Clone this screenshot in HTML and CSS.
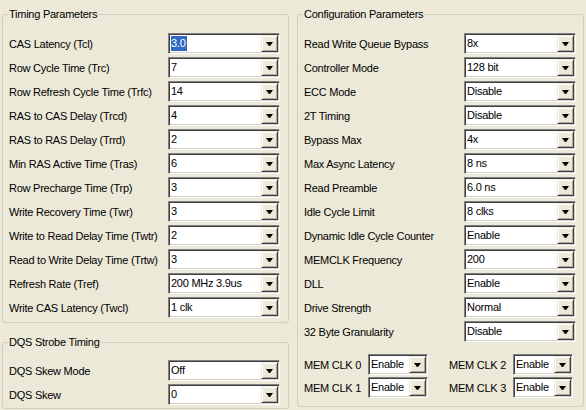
FILE: index.html
```html
<!DOCTYPE html>
<html>
<head>
<meta charset="utf-8">
<link rel="stylesheet" href="styles.css">
</head>
<body>
<div class="page">
  <div class="col">
    <div class="group g-timing">
      <span class="title">Timing Parameters</span>
      <div class="rows">
        <div class="row"><span class="lbl">CAS Latency (Tcl)</span><div class="combo"><span class="val"><span class="sel">3.0</span></span><span class="btn"></span></div></div>
        <div class="row"><span class="lbl">Row Cycle Time (Trc)</span><div class="combo"><span class="val">7</span><span class="btn"></span></div></div>
        <div class="row"><span class="lbl">Row Refresh Cycle Time (Trfc)</span><div class="combo"><span class="val">14</span><span class="btn"></span></div></div>
        <div class="row"><span class="lbl">RAS to CAS Delay (Trcd)</span><div class="combo"><span class="val">4</span><span class="btn"></span></div></div>
        <div class="row"><span class="lbl">RAS to RAS Delay (Trrd)</span><div class="combo"><span class="val">2</span><span class="btn"></span></div></div>
        <div class="row"><span class="lbl">Min RAS Active Time (Tras)</span><div class="combo"><span class="val">6</span><span class="btn"></span></div></div>
        <div class="row"><span class="lbl">Row Precharge Time (Trp)</span><div class="combo"><span class="val">3</span><span class="btn"></span></div></div>
        <div class="row"><span class="lbl">Write Recovery Time (Twr)</span><div class="combo"><span class="val">3</span><span class="btn"></span></div></div>
        <div class="row"><span class="lbl">Write to Read Delay Time (Twtr)</span><div class="combo"><span class="val">2</span><span class="btn"></span></div></div>
        <div class="row"><span class="lbl">Read to Write Delay Time (Trtw)</span><div class="combo"><span class="val">3</span><span class="btn"></span></div></div>
        <div class="row"><span class="lbl">Refresh Rate (Tref)</span><div class="combo"><span class="val">200 MHz 3.9us</span><span class="btn"></span></div></div>
        <div class="row"><span class="lbl">Write CAS Latency (Twcl)</span><div class="combo"><span class="val">1 clk</span><span class="btn"></span></div></div>
      </div>
    </div>
    <div class="group g-dqs">
      <span class="title">DQS Strobe Timing</span>
      <div class="rows">
        <div class="row"><span class="lbl">DQS Skew Mode</span><div class="combo"><span class="val">Off</span><span class="btn"></span></div></div>
        <div class="row"><span class="lbl">DQS Skew</span><div class="combo"><span class="val">0</span><span class="btn"></span></div></div>
      </div>
    </div>
  </div>
  <div class="group g-config">
    <span class="title">Configuration Parameters</span>
    <div class="rows wide">
      <div class="row"><span class="lbl">Read Write Queue Bypass</span><div class="combo"><span class="val">8x</span><span class="btn"></span></div></div>
      <div class="row"><span class="lbl">Controller Mode</span><div class="combo"><span class="val">128 bit</span><span class="btn"></span></div></div>
      <div class="row"><span class="lbl">ECC Mode</span><div class="combo"><span class="val">Disable</span><span class="btn"></span></div></div>
      <div class="row"><span class="lbl">2T Timing</span><div class="combo"><span class="val">Disable</span><span class="btn"></span></div></div>
      <div class="row"><span class="lbl">Bypass Max</span><div class="combo"><span class="val">4x</span><span class="btn"></span></div></div>
      <div class="row"><span class="lbl">Max Async Latency</span><div class="combo"><span class="val">8 ns</span><span class="btn"></span></div></div>
      <div class="row"><span class="lbl">Read Preamble</span><div class="combo"><span class="val">6.0 ns</span><span class="btn"></span></div></div>
      <div class="row"><span class="lbl">Idle Cycle Limit</span><div class="combo"><span class="val">8 clks</span><span class="btn"></span></div></div>
      <div class="row"><span class="lbl">Dynamic Idle Cycle Counter</span><div class="combo"><span class="val">Enable</span><span class="btn"></span></div></div>
      <div class="row"><span class="lbl">MEMCLK Frequency</span><div class="combo"><span class="val">200</span><span class="btn"></span></div></div>
      <div class="row"><span class="lbl">DLL</span><div class="combo"><span class="val">Enable</span><span class="btn"></span></div></div>
      <div class="row"><span class="lbl">Drive Strength</span><div class="combo"><span class="val">Normal</span><span class="btn"></span></div></div>
      <div class="row"><span class="lbl">32 Byte Granularity</span><div class="combo"><span class="val">Disable</span><span class="btn"></span></div></div>
    </div>
    <div class="memclk">
      <span class="mlbl">MEM CLK 0</span><div class="combo small"><span class="val">Enable</span><span class="btn"></span></div>
      <span class="mlbl">MEM CLK 2</span><div class="combo small"><span class="val">Enable</span><span class="btn"></span></div>
      <span class="mlbl">MEM CLK 1</span><div class="combo small"><span class="val">Enable</span><span class="btn"></span></div>
      <span class="mlbl">MEM CLK 3</span><div class="combo small"><span class="val">Enable</span><span class="btn"></span></div>
    </div>
  </div>
</div>
</body>
</html>
```

FILE: styles.css
```css
html, body {
  margin: 0;
  background: #ECE9D8;
}
body {
  font-family: "Liberation Sans", Arial, sans-serif;
  font-size: 11px;
  letter-spacing: -0.25px;
  color: #000;
}
.page {
  display: flex;
  gap: 8px;
  padding: 14px 0 0 2px;
  align-items: flex-start;
}
.col {
  display: flex;
  flex-direction: column;
  gap: 19px;
  width: 287px;
}
.group {
  position: relative;
  border: 1px solid #D0D0BF;
  border-radius: 3px;
  box-sizing: border-box;
}
.g-timing {
  height: 309px;
  padding: 18px 0 0 6px;
}
.g-dqs {
  height: 67px;
  padding: 17px 0 0 6px;
}
.g-config {
  width: 287px;
  height: 393px;
  padding: 18px 0 0 6px;
}
.title {
  position: absolute;
  top: -7px;
  left: 5px;
  padding: 0 1px;
  line-height: 13px;
  background: #ECE9D8;
  white-space: nowrap;
}
.rows {
  display: flex;
  flex-direction: column;
  gap: 3px;
}
.row {
  display: flex;
  align-items: center;
  height: 21px;
}
.lbl {
  width: 159px;
  white-space: nowrap;
}
.wide .lbl {
  width: 160px;
}
.combo {
  width: 112px;
  height: 21px;
  box-sizing: border-box;
  display: flex;
  align-items: stretch;
  padding: 1px;
  background: #fff;
  border: 1px solid;
  border-color: #808080 #fff #fff #808080;
  box-shadow: inset 1px 1px 0 #404040, inset -1px -1px 0 #D4D0C8;
}
.val {
  flex: 1;
  padding-left: 1px;
  line-height: 17px;
  white-space: nowrap;
  overflow: hidden;
}
.sel {
  display: inline-block;
  background: #316AC5;
  color: #fff;
  line-height: 15px;
  margin-top: 1px;
  padding-right: 1px;
}
.btn {
  width: 17px;
  box-sizing: border-box;
  background: #ECE9D8;
  border: 1px solid;
  border-color: #ECE9D8 #404040 #404040 #ECE9D8;
  box-shadow: inset 1px 1px 0 #fff, inset -1px -1px 0 #ACA899;
  display: flex;
  align-items: center;
  justify-content: center;
}
.btn::after {
  content: "";
  width: 1px;
  height: 0;
  border-left: 3px solid transparent;
  border-right: 3px solid transparent;
  border-top: 4px solid #000;
}
.memclk {
  display: grid;
  grid-template-columns: 64px 81px 64px 60px;
  row-gap: 2px;
  margin-top: 12px;
  align-items: center;
}
.mlbl {
  white-space: nowrap;
}
.combo.small {
  width: 60px;
}
```
